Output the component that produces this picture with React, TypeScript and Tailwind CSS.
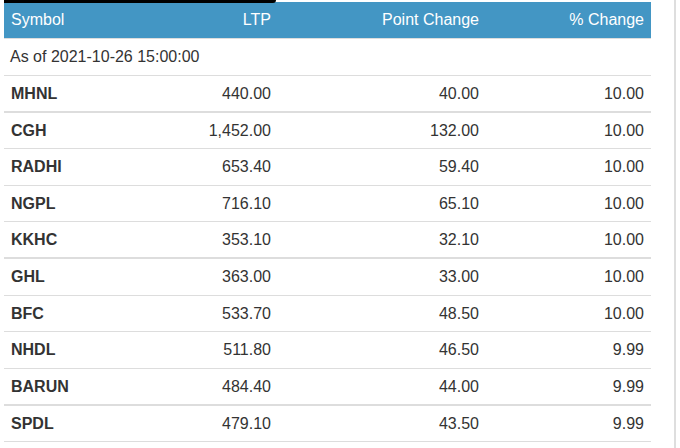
import React from "react";

type Row = { s: string; ltp: string; pc: string; pct: string; h: number; b: number };

const rows: Row[] = [
  { s: "MHNL", ltp: "440.00", pc: "40.00", pct: "10.00", h: 35, b: 2 },
  { s: "CGH", ltp: "1,452.00", pc: "132.00", pct: "10.00", h: 35, b: 1 },
  { s: "RADHI", ltp: "653.40", pc: "59.40", pct: "10.00", h: 36, b: 1 },
  { s: "NGPL", ltp: "716.10", pc: "65.10", pct: "10.00", h: 35, b: 1 },
  { s: "KKHC", ltp: "353.10", pc: "32.10", pct: "10.00", h: 35, b: 2 },
  { s: "GHL", ltp: "363.00", pc: "33.00", pct: "10.00", h: 36, b: 1 },
  { s: "BFC", ltp: "533.70", pc: "48.50", pct: "10.00", h: 35, b: 1 },
  { s: "NHDL", ltp: "511.80", pc: "46.50", pct: "9.99", h: 36, b: 1 },
  { s: "BARUN", ltp: "484.40", pc: "44.00", pct: "9.99", h: 35, b: 2 },
  { s: "SPDL", ltp: "479.10", pc: "43.50", pct: "9.99", h: 35, b: 1 },
];

const grid = "grid grid-cols-[136px_138px_208px_165px] items-center";

export default function App() {
  return (
    <div
      className="relative w-[680px] h-[448px] overflow-hidden bg-white text-[16px] text-[#333333]"
      style={{ fontFamily: '"Liberation Sans", Arial, sans-serif' }}
    >
      <div className="absolute top-0 left-[4px] w-[272px] h-[3px] bg-black rounded-br-[4px]" />
      <div className="flex h-full">
        <div className="ml-[4px] mt-[2px] w-[647px]">
          <div className={`${grid} h-[36px] bg-[#4396c4] text-white border-b border-[#dddddd] box-content`}>
            <div className="pl-[7px]">Symbol</div>
            <div className="text-right pr-[7px]">LTP</div>
            <div className="text-right pr-[7px]">Point Change</div>
            <div className="text-right pr-[7px]">% Change</div>
          </div>
          <div className="h-[36px] flex items-center pl-[6px] border-b border-[#dddddd] box-content">
            As of 2021-10-26 15:00:00
          </div>
          {rows.map((r) => (
            <div
              key={r.s}
              className={`${grid} box-content border-[#dddddd] ${r.b === 2 ? "border-b-2" : "border-b"}`}
              style={{ height: r.h }}
            >
              <div className="pl-[7px] font-bold">{r.s}</div>
              <div className="text-right pr-[7px]">{r.ltp}</div>
              <div className="text-right pr-[7px]">{r.pc}</div>
              <div className="text-right pr-[7px]">{r.pct}</div>
            </div>
          ))}
        </div>
        <div className="ml-[23px] w-[2px] h-full bg-[#dedede]" />
      </div>
    </div>
  );
}
